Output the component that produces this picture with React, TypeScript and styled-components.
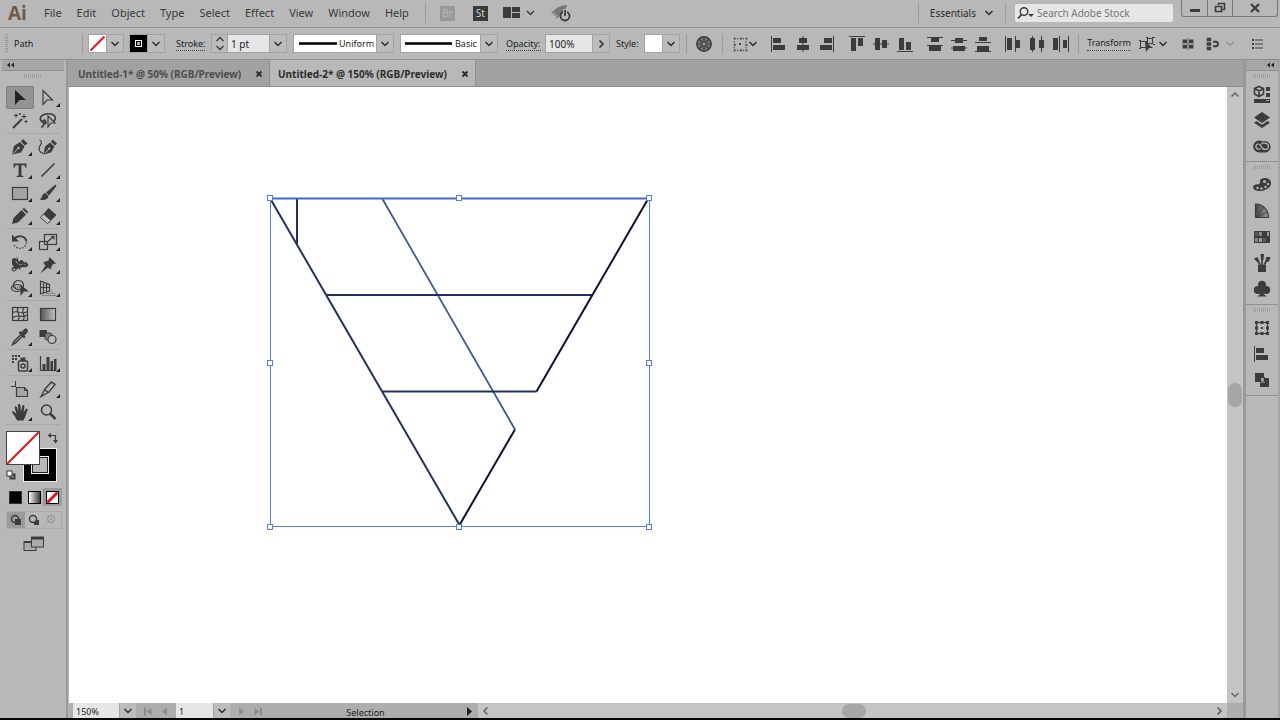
import React from "react";
import styled, { createGlobalStyle, css } from "styled-components";

const ink = "#3c3c3c";
const panel = "#b8b8b8";
const sans = `"Noto Sans", "Open Sans", sans-serif`;

const GlobalStyle = createGlobalStyle`
  *, *::before, *::after { box-sizing: border-box; }
  body { margin: 0; background: ${panel}; color: #2b2b2b; font-family: ${sans}; font-size: 11px; line-height: 16px; }
  button, input, select { font: inherit; color: inherit; margin: 0; padding: 0; border: 0; border-radius: 0; background: none; }
  button { display: inline-flex; align-items: center; justify-content: center; flex: none; }
  svg { display: block; flex: none; }
`;

/* ---------- shell ---------- */

const Shell = styled.div`
  display: flex;
  flex-direction: column;
  min-height: 100vh;
  border-bottom: 2px solid #050507;
`;

const MenuBar = styled.header`
  display: flex;
  align-items: center;
  height: 28px;
  padding: 0 2px 1px 8px;
  border-bottom: 1px solid #8f8f8f;
`;

const Logo = styled.span`
  width: 20px;
  margin-right: 16px;
  color: #6e5a4b;
  font: 700 19px/24px "Open Sans", sans-serif;
`;

const Menus = styled.nav`
  display: flex;
  gap: 15px;
`;

const MenuButton = styled.button`
  color: #383838;
`;

const Divider = styled.span<{ $left: number; $right: number }>`
  flex: none;
  width: 1px;
  height: 20px;
  margin: 0 ${(p) => p.$right}px 0 ${(p) => p.$left}px;
  background: #9c9c9c;
`;

const AppTile = styled.button<{ $dim?: boolean }>`
  width: 15px;
  height: 15px;
  margin-right: ${(p) => (p.$dim ? 18 : 15)}px;
  background: ${(p) => (p.$dim ? "#999" : "#3a3a3a")};
  color: ${(p) => (p.$dim ? "#b8b8b8" : "#d0d0d0")};
  font-size: 10px;
  line-height: 15px;
`;

const Spacer = styled.span`
  flex: 1;
`;

const Workspace = styled.button`
  gap: 8px;
  color: #2b2b2b;
  font-size: 10px;
`;

const SearchBox = styled.label`
  display: flex;
  align-items: center;
  width: 158px;
  height: 18px;
  padding-left: 2px;
  gap: 1px;
  background: #e6e6e6;
  border-radius: 2px;
  font-size: 10px;

  input { flex: 1; min-width: 0; outline: 0; }
  input::placeholder { color: #757575; opacity: 1; }
`;

const WindowButtons = styled.div`
  display: flex;
  align-self: flex-start;
  margin-left: 8px;
  height: 17px;
  border: 1px solid #777;
  border-top: 0;
  border-radius: 0 0 3px 3px;

  button { width: 25px; }
  button + button { border-left: 1px solid #777; }
  button:last-child { width: 45px; }
`;

/* ---------- control bar ---------- */

const ControlBar = styled.section`
  display: flex;
  align-items: center;
  height: 32px;
  padding: 0 12px 0 5px;
  border-bottom: 1px solid #8f8f8f;
  font-size: 9px;
  color: #1c1c1c;
`;

const SideGrip = styled.span`
  width: 3px;
  height: 20px;
  margin-right: 6px;
  background: repeating-linear-gradient(#989898 0 1px, transparent 1px 2px);
`;

const ObjectName = styled.span`
  width: 68px;
`;

const Group = styled.div<{ $width: number; $gap?: number }>`
  display: flex;
  flex: none;
  width: ${(p) => p.$width}px;
  height: 19px;
  margin-right: ${(p) => p.$gap ?? 6}px;
  border: 1px solid #a3a3a3;
  background: #fff;

  input, select { flex: 1; min-width: 0; outline: 0; appearance: none; }
  input { padding-left: 3px; background: #e6e6e6; font-size: 10px; }
`;

const Drop = styled.button`
  width: 17px;
  background: #bcbcbc;
  border-left: 1px solid #a3a3a3;
`;

const Stepper = styled.button`
  width: 16px;
  background: #bcbcbc;
  border-right: 1px solid #a3a3a3;
`;

const Swatch = styled.button`
  flex: 1;
`;

const Caption = styled.label<{ $width: number; $dotted?: boolean }>`
  flex: none;
  width: ${(p) => p.$width}px;
  line-height: 14px;
  white-space: nowrap;

  span { border-bottom: ${(p) => (p.$dotted ? "1px dotted #444" : "0")}; }
`;

const LinkButton = styled.button`
  width: 44px;
  height: 14px;
  margin-right: 6px;
  border-bottom: 1px dotted #444;
  white-space: nowrap;
`;

const IconButton = styled.button<{ $width?: number; $gap?: number }>`
  width: ${(p) => p.$width ?? 20}px;
  height: 20px;
  margin-right: ${(p) => p.$gap ?? 0}px;
`;

const AlignSet = styled.div<{ $gap: number }>`
  display: flex;
  gap: 4px;
  margin-right: ${(p) => p.$gap}px;
`;

/* ---------- body ---------- */

const Body = styled.div`
  display: flex;
  flex: 1;
`;

const Tools = styled.aside`
  flex: none;
  width: 68px;
  padding: 0 2px;
  border-right: 2px solid #999;
`;

const DockHead = styled.button<{ $end?: boolean }>`
  display: flex;
  width: 100%;
  height: 11px;
  padding: 0 4px;
  justify-content: ${(p) => (p.$end ? "flex-end" : "flex-start")};
  background: #a6a6a6;
  border-bottom: 1px solid #909090;
`;

const Grip = styled.div<{ $height: number }>`
  height: ${(p) => p.$height}px;
  padding: 3px 0;

  &::after {
    content: "";
    display: block;
    width: 18px;
    height: 4px;
    margin: 0 auto;
    background: repeating-linear-gradient(90deg, #a0a0a0 0 1px, transparent 1px 2px);
  }
`;

const ToolGroup = styled.div`
  display: grid;
  grid-template-columns: 28px 28px;
  grid-auto-rows: 23px;
  margin: 0 4px;
  padding: 1px 0;
  border-bottom: 1px solid #a8a8a8;
`;

const ToolButton = styled.button<{ $active?: boolean; $more?: boolean }>`
  position: relative;
  width: 28px;
  height: 23px;
  border-radius: 2px;
  ${(p) => p.$active && css`background: #939393; border: 1px solid #7d7d7d;`}
  ${(p) =>
    p.$more &&
    css`
      &::after {
        content: "";
        position: absolute;
        right: 2px;
        bottom: 2px;
        border-left: 4px solid transparent;
        border-bottom: 4px solid #222;
      }
    `}
`;

const Paints = styled.div`
  position: relative;
  height: 52px;
  margin: 6px 4px 5px;
`;

const PaintSlot = styled.button<{ $x: number; $y: number }>`
  position: absolute;
  left: ${(p) => p.$x}px;
  top: ${(p) => p.$y}px;
`;

const ModeRow = styled.div<{ $framed?: boolean }>`
  display: flex;
  width: 56px;
  height: 18px;
  margin: 0 4px 5px;
  ${(p) => p.$framed && css`border: 1px solid #aaa;`}
`;

const Mode = styled.button<{ $active?: boolean }>`
  flex: 1;
  background: ${(p) => (p.$active ? "#9b9b9b" : "transparent")};
`;

const ScreenMode = styled.button`
  width: 56px;
  margin: 2px 4px;
`;

const Document = styled.main`
  display: flex;
  flex: 1;
  flex-direction: column;
  min-width: 0;
`;

const TabStrip = styled.div`
  display: flex;
  height: 27px;
  background: #a2a2a2;
  border-bottom: 1px solid #8d8d8d;
`;

const Tab = styled.div<{ $active?: boolean }>`
  display: flex;
  align-items: center;
  justify-content: space-between;
  width: ${(p) => (p.$active ? 206 : 202)}px;
  padding: 2px 5px 0 ${(p) => (p.$active ? 8 : 10)}px;
  background: ${(p) => (p.$active ? panel : "transparent")};
  border-right: 1px solid #8f8f8f;
  color: ${(p) => (p.$active ? "#2c2c2c" : "#4d4d4d")};
  font-size: 10px;
  font-weight: 700;
  white-space: nowrap;
`;

const CloseTab = styled.button`
  width: 10px;
  height: 12px;
`;

const Stage = styled.div`
  display: flex;
  flex: 1;
`;

const Canvas = styled.div`
  position: relative;
  flex: 1;
  margin-left: 1px;
  background: #fff;
  overflow: hidden;
`;

const Artwork = styled.svg`
  position: absolute;
  left: 196px;
  top: 106px;
`;

const VScroll = styled.div`
  display: flex;
  flex-direction: column;
  align-items: center;
  width: 16px;
  padding: 3px 0;
  background: #c4c4c4;
`;

const Track = styled.div<{ $grow: number }>`
  flex: ${(p) => p.$grow};
`;

const Thumb = styled.div<{ $w: number; $h: number }>`
  width: ${(p) => p.$w}px;
  height: ${(p) => p.$h}px;
  border-radius: 8px;
  background: #a6a6a6;
`;

const StatusBar = styled.footer`
  display: flex;
  height: 15px;
  margin-left: 1px;
  background: #adadad;
  font-size: 9px;
  color: #1c1c1c;
`;

const StatusField = styled.div<{ $field: number; $left: number }>`
  display: flex;
  margin-left: ${(p) => p.$left}px;

  input { width: ${(p) => p.$field}px; padding: 3px 0 0 3px; background: #e6e6e6; outline: 0; }
`;

const StatusNav = styled.div`
  display: flex;
  padding: 0 3px;
`;

const NavButton = styled.button`
  width: 17px;
  padding-top: 2px;
`;

const StatusText = styled.span`
  width: 191px;
  padding-top: 2px;
  text-align: center;
`;

const HScroll = styled.div`
  display: flex;
  flex: 1;
  align-items: center;
  padding: 0 3px;
  background: #c4c4c4;
`;

const Corner = styled.span`
  width: 16px;
  background: #aeaeae;
`;

const Dock = styled.aside`
  flex: none;
  width: 37px;
  border-left: 3px solid #999;
  border-right: 2px solid #a4a4a4;
`;

const DockGroup = styled.div`
  padding-bottom: 2px;
  border-bottom: 1px solid #8f8f8f;
`;

const DockButton = styled.button`
  display: flex;
  width: 100%;
  height: 26px;
`;

/* ---------- icons ---------- */

const line = (w = 1.3, color = ink) => ({ fill: "none", stroke: color, strokeWidth: w });

const Chevron = ({ dir = "down", color = "#2d2d2d" }: { dir?: string; color?: string }) => {
  const d: Record<string, string> = {
    down: "M1.5 3 L5 6.5 L8.5 3",
    up: "M1.5 6.5 L5 3 L8.5 6.5",
    right: "M3.5 1.5 L7 5 L3.5 8.5",
    left: "M6.5 1.5 L3 5 L6.5 8.5",
  };
  return (
    <svg width="10" height="10" viewBox="0 0 10 10">
      <path d={d[dir]} {...line(1.5, color)} />
    </svg>
  );
};

const Collapse = () => (
  <svg width="8" height="6" viewBox="0 0 8 6">
    <path d="M4 0.5V5.5L1 3zM8 0.5V5.5L5 3z" fill="#222" />
  </svg>
);

const shapes: Record<string, React.ReactNode> = {
  selection: <path d="M5 2 L16 12 H9.5 L5 17z" fill="#222" />,
  direct: <path d="M5 2.5 L14.5 12 H9 L5 16.5z" {...line(1.2)} />,
  wand: (
    <>
      <path d="M3 17 L12 8" {...line(2)} />
      <path d="M14 3v5M11.5 5.5h5M6 2.5v4M4 4.5h4M16 9v3M14.5 10.5h3M10 2v2M9 3h2" {...line(1)} />
    </>
  ),
  lasso: (
    <>
      <path d="M8.500 11.500C5 12 1.500 10 2.500 6.500 4 3 11 1.500 15.500 4c3 2 2 5 0 6.500M8 11c-1.500-4 -4-1-2.500 1 2 2 3 0 2-2M5 13c1 2 0 3-2 3" {...line(1.600)} />
      <path d="M10 5 L17 12 H13 L10 16z" fill={panel} stroke={ink} strokeWidth="1.200" />
    </>
  ),
  pen: (
    <>
      <path d="M2 17.500 L4 9 10 5 14.500 9.500 11 15.500z" fill={ink} />
      <path d="M11 4.500 L13 2 17.500 6.500 15 8.500z" fill={ink} />
      <path d="M3 16.500 L8 11.500" {...line(1, panel)} />
      <circle cx="8.500" cy="11" r="1.200" fill={panel} />
    </>
  ),
  curvature: (
    <>
      <path d="M5.500 17.500 L7 9.500 12 5.500 16.500 9.500 13 15.500z M13 5 L14.500 2.500 19 6.500 17 8.500z" fill={ink} />
      <path d="M1.500 3c3 1 2 4 0 6.500 -1 3 0 6 4 7" {...line(1.200)} />
      <path d="M7 16 L11 12" {...line(1, panel)} />
      <circle cx="11.300" cy="11.500" r="1.100" fill={panel} />
    </>
  ),
  type: <path d="M3.5 3.5h13v4h-1.300l-.8-2.200h-3v10.200l2 .5v1H6.600v-1l2-.5V5.300h-3l-.8 2.200H3.500z" fill={ink} />,
  line: <path d="M3.5 16.5 L16.5 3.5" {...line(1.6)} />,
  rect: <rect x="2.5" y="4.500" width="15" height="12" fill="#a3a3a3" stroke={ink} strokeWidth="1.200" />,
  brush: (
    <>
      <path d="M17.500 1.500 L8 9.500 11 12.500 18.500 3z" fill={ink} />
      <path d="M7.500 10 L10.500 13c0 3-4 5-9 3.500 3-1 2-6 6-6.500z" fill={ink} />
    </>
  ),
  pencil: <path d="M2 18 L3.500 12 11.500 4 16 8.500 8 16.500z M12.500 3.200 L14 1.800 18.200 6 16.700 7.500z" fill={ink} />,
  eraser: (
    <>
      <path d="M10.500 2 L18.500 9 13 14.500 5.500 8z" fill={ink} />
      <path d="M5.500 8 L13 14.500 9.500 17.500 2.500 11.500z" fill="#c2c2c2" stroke={ink} strokeWidth="1" />
    </>
  ),
  rotate: (
    <>
      <path d="M4.500 6.500C8 2.500 15.500 4 16.500 9.500" {...line(1.900)} />
      <path d="M2 2.500v7h7z" fill={ink} />
      <path d="M16.500 10.500C16 17 7 19 3.500 12" {...line(1.300)} strokeDasharray="1.500 1.500" />
    </>
  ),
  scale: (
    <>
      <rect x="1.500" y="9.500" width="8" height="8" {...line(1.200)} />
      <rect x="6.500" y="2.500" width="12" height="10" {...line(1.200)} />
      <path d="M10 9.500 L15 5" {...line(1.200)} />
      <path d="M12.500 4h4v4z" fill={ink} />
    </>
  ),
  width: (
    <>
      <path d="M3 3c3 0 5 2 6 4 1-2 3-3 4-1 1 2 4 1 5 3 1 2-2 4-4 3 -2 0-3 1-5 1 -3 1-3 3-6 3 -2-1-2-4 1-4 -2-2-3-6-1-9z" fill={ink} />
      <path d="M5.500 6c2 1 2 4 5 4s3-2 5 0" {...line(1, panel)} />
      <path d="M7 2.500 L10 15M3 15 L17 7.500" {...line(1)} />
      <circle cx="4" cy="14.500" r="1.600" fill={panel} stroke={ink} />
    </>
  ),
  pin: <path d="M11.500 2 L18 8.500 14.500 9.500 12.500 14.500 10 12.500 2.500 18.500 7.500 10.500 5 7.500 10.500 5.500z" fill={ink} />,
  builder: (
    <>
      <ellipse cx="8.500" cy="7" rx="5" ry="4.500" {...line(1.200)} />
      <ellipse cx="7" cy="10" rx="5.500" ry="3.500" {...line(1.200)} />
      <path d="M3 9h10" {...line(1)} strokeDasharray="1 1" />
      <path d="M10.500 6.500 L19 13.500 H14 L10.500 18z" fill={ink} />
    </>
  ),
  perspective: (
    <>
      <path d="M2.500 2.500V16.500M2.500 3 L11.500 6.500V13L2.500 16M5.500 4v11M8.500 5v9M2.500 9.500h9" {...line(1.200)} />
      <path d="M4 17.500 H18 L12 11.500M8 15.500h8" {...line(0.800, "#777")} />
    </>
  ),
  mesh: (
    <>
      <rect x="2.500" y="3.500" width="15" height="13" {...line(1.200)} />
      <path d="M2.500 8.500c5-3 9 3 15-1M2.500 14c6-5 9 1 15-3M8 3.500c-3 5 4 7 0 13M14 3.500c-4 5 3 8-1 13" {...line(1.200)} />
    </>
  ),
  gradient: (
    <>
      <defs>
        <linearGradient id="toolGradient">
          <stop offset="0" stopColor="#555" />
          <stop offset="1" stopColor="#c4c4c4" />
        </linearGradient>
      </defs>
      <rect x="2.500" y="4.500" width="15" height="12" fill="url(#toolGradient)" stroke={ink} strokeWidth="1.200" />
    </>
  ),
  eyedropper: (
    <>
      <path d="M11 7.500 L4 14.500 2.500 17.500 5.500 16 12.500 9" {...line(1.500)} />
      <path d="M8.500 5.500 L10.500 4 11.500 5 14.500 2c2-1.500 4.500 1 3 3.300L14.500 8.500 15.500 9.500 14 11.500z" fill={ink} />
    </>
  ),
  blend: (
    <>
      <rect x="1.500" y="3" width="7.500" height="7" fill={ink} />
      <rect x="7" y="6" width="7" height="7" rx="2" fill="#808080" stroke={ink} />
      <circle cx="14" cy="12.500" r="4" fill="#bdbdbd" stroke={ink} strokeWidth="1.200" />
    </>
  ),
  spray: (
    <>
      <path d="M2 2h2v2H2zM5 2h2v2H5zM8 2h2v2H8zM2 5h2v2H2zM5 5h2v2H5zM2 8h2v2H2z" fill={ink} />
      <rect x="8.500" y="8" width="9" height="10" rx="1" {...line(1.500)} />
      <path d="M10.500 8V4.500h5V8z" fill={ink} />
      <circle cx="13" cy="13" r="2" {...line(1.400)} />
    </>
  ),
  graph: (
    <>
      <path d="M2.500 3V17.500H18.500" {...line(1.200)} />
      <path d="M4.500 11h3v6h-3zM8.500 4h3v13h-3zM12.500 8h2.500v9h-2.500zM16 6h2.500v11h-2.500z" fill={ink} />
    </>
  ),
  artboard: (
    <>
      <path d="M5.500 2v5M1 7.500h5" {...line(1.100)} />
      <path d="M6.500 8.500H14.500L17.500 11.500V17.500H6.500z" fill="#a5a5a5" stroke={ink} strokeWidth="1.200" />
      <path d="M14.500 8.500v3h3" {...line(1)} />
    </>
  ),
  slice: <path d="M3 17.5 L7 10 13.500 3 17 5.500 11 13z M6.500 10.500 L10.500 13.500" {...line(1.4)} />,
  hand: (
    <path
      d="M7 18.500 L5 14.500 2 10.500c0-1.500 1.500-1.500 2.500-.5L6.500 12 4.500 5.500c0-1.500 2-1.700 2.500-.2L8.300 9.500 8 3.300c0-1.700 2.300-1.700 2.400 0L11 9.500 12.300 4c.4-1.500 2.300-1.200 2.100.4L13.700 10.500 15.500 7.300c.8-1.200 2.600-.5 2 1L15.300 14.500 13.500 18.500z"
      fill={ink}
    />
  ),
  zoom: (
    <>
      <circle cx="8.500" cy="8" r="5" {...line(1.500)} />
      <path d="M12 11.500 L17.500 17" {...line(2.500)} />
    </>
  ),
  wheel: (
    <>
      <circle cx="10" cy="10" r="7.200" fill="#777" stroke={ink} strokeWidth="1.500" />
      <path d="M10 3v14M3 10h14M5 5 L15 15M15 5 L5 15" {...line(1.200)} />
      <circle cx="10" cy="10" r="2.200" fill="#999" stroke={ink} />
    </>
  ),
  grid: (
    <path
      d="M2 3h2v2H2zM6 3h1v2H6zM9 3h2v2H9zM12 3h1v2h-1zM15 3h2v2h-2zM2 7h1v2H2zM15 7h1v2h-1zM2 10h2v2H2zM8 9h2v2H8zM15 10h2v2h-2zM2 16h2v2H2zM6 16h1v2H6zM9 16h2v2H9zM12 16h1v2h-1zM15 16h2v2h-2zM2 13h1v2H2zM15 13h1v2h-1z"
      fill={ink}
    />
  ),
  alignL: <path d="M2 2h1v16H2zM4 4h8v5H4zM4 11h12v5H4z" fill={ink} />,
  alignC: <path d="M9.500 2h1v16h-1zM6 4h8v5H6zM4 11h12v5H4z" fill={ink} />,
  alignR: <path d="M16 2h1v16h-1zM7 4h8v5H7zM3 11h12v5H3z" fill={ink} />,
  alignT: <path d="M2 2h16v1H2zM4 4h5v13H4zM11 4h5v8h-5z" fill={ink} />,
  alignM: <path d="M2 9.500h16v1H2zM4 4h5v12H4zM11 6h5v8h-5z" fill={ink} />,
  alignB: <path d="M2 17h16v1H2zM4 4h5v12H4zM11 8h5v8h-5z" fill={ink} />,
  distT: <path d="M2 3h16v1H2zM6 4h8v4H6zM2 11h16v1H2zM4 12h12v5H4z" fill={ink} />,
  distM: <path d="M2 6h16v1H2zM6 4h8v5H6zM2 13.500h16v1H2zM4 12h12v5H4z" fill={ink} />,
  distB: <path d="M2 8h16v1H2zM6 3h8v4H6zM2 17h16v1H2zM4 12h12v5H4z" fill={ink} />,
  distL: <path d="M2 2h1v16H2zM4 4h5v12H4zM12 2h1v16h-1zM13 6h4v8h-4z" fill={ink} />,
  distC: <path d="M5 2h1v16H5zM3 4h5v12H3zM14 2h1v16h-1zM12 6h5v8h-5z" fill={ink} />,
  distR: <path d="M8 2h1v16H8zM2 4h5v12H2zM17 2h1v16h-1zM12 6h4v8h-4z" fill={ink} />,
  similar: (
    <>
      <rect x="3.500" y="7.500" width="6" height="6" {...line(1)} />
      <rect x="10.500" y="4.500" width="5" height="5" {...line(1)} />
      <path d="M2 6.500h2M2 14.500h2M9 3.500h2M15 3.500h3M16 10.500h2" {...line(1.200)} />
      <path d="M8 7.500 L16 14 H12 L9 18z" fill={ink} />
    </>
  ),
  isolate: (
    <path d="M4 5h5v4H4zM11 5h5v4h-5zM4 11h5v4H4zM11 11h5v4h-5zM9.700 3h.6v14h-.6zM3 9.700h14v.6H3z" fill={ink} />
  ),
  snap: (
    <>
      <path d="M3 3h5v4H3zM3 8h5v4H3zM3 13h5v4H3z" fill={ink} />
      <path d="M10 7.500h3a2.500 2.500 0 0 1 0 5h-3" {...line(2)} />
    </>
  ),
  list: <path d="M4 5h2v2H4zM4 9h2v2H4zM4 13h2v2H4zM7 5.500h8v1H7zM7 9.500h8v1H7zM7 13.500h8v1H7z" fill={ink} />,
  libraries: (
    <>
      <path d="M7 2.500 L11.500 4.500V10L7 12.500 2.500 10V4.500z M2.500 4.500 L7 7 11.500 4.500M7 7v5.500" {...line(1.600)} />
      <path d="M14 3h4v4h-4zM14 9h4v4h-4zM2 15h16v4H2z" fill={ink} />
      <path d="M14 16.500h3" {...line(1, "#aaa")} />
    </>
  ),
  layers: (
    <>
      <path d="M10 2 L18 7.500 10 13 2 7.500z" fill={ink} />
      <path d="M4.500 11 L10 14.800 15.500 11 18 12.700 10 18 2 12.700z" fill={ink} />
    </>
  ),
  cloud: (
    <>
      <path d="M7 16.500a6 6 0 1 1 3.500-11 5.800 5.800 0 1 1 3.500 11z" fill={ink} />
      <path d="M12.500 13.200C9.500 14.500 9.500 8 6.500 8a2.600 2.600 0 0 0 0 5.200h2M9 8.500c2-3 7.500-1.500 7.500 2 0 3-4 4-5.500 1.500" {...line(1.200, panel)} />
    </>
  ),
  palette: (
    <>
      <path d="M8 5.500c0-3 10-4 11 2 .5 6-7 9-13 8.500C0 15.500 0 10 3.500 9.500c3 0 5.500-.5 4.500-4z" fill={ink} />
      <g fill={panel}>
        <circle cx="5.500" cy="13" r="1.200" />
        <circle cx="9.500" cy="13.500" r="1.200" />
        <circle cx="13.500" cy="12" r="1.200" />
        <circle cx="16" cy="9" r="1.200" />
        <circle cx="12.500" cy="6.500" r="1.500" />
      </g>
    </>
  ),
  guide: (
    <>
      <defs>
        <linearGradient id="guideGradient">
          <stop offset="0" stopColor="#444" />
          <stop offset="1" stopColor="#999" />
        </linearGradient>
      </defs>
      <path d="M3.500 3C11 3 16.500 9 16.500 16.500H3.500z" fill="url(#guideGradient)" stroke={ink} strokeWidth="1.200" />
      <path d="M3.500 16.500 L12 6M3.500 16.500 L15.500 11" {...line(0.800)} />
    </>
  ),
  swatches: (
    <>
      <rect x="2" y="4" width="16" height="12" fill={ink} />
      <path d="M7 5h3v4H7zM3 11h3v4H3z" fill="#858585" />
      <path d="M15 5h2v4h-2zM7 11h3v4H7z" fill="#9a9a9a" />
      <path d="M3 5h3v4H3zM11 11h3v4h-3z" fill="#5c5c5c" />
    </>
  ),
  brushes: (
    <>
      <path d="M6 12h8v7H6z" fill={ink} />
      <path d="M8 12 L5 6M10 12V5M12 12 L15 7" {...line(1.700)} />
      <path d="M2 5.500 L5.500 4 7.500 8.500 4.500 8.500zM8.500 1h3.500L11.500 7H9zM14 4l4.500 0-1.500 4.500-3.500 .500z" fill={ink} />
    </>
  ),
  symbols: (
    <>
      <circle cx="10" cy="5.800" r="4" fill={ink} />
      <circle cx="5.800" cy="11" r="4" fill={ink} />
      <circle cx="14.200" cy="11" r="4" fill={ink} />
      <path d="M9 9h2c0 5 1 7 4 8.500H5c3-1.500 4-3.500 4-8.500z" fill={ink} />
    </>
  ),
  transform: (
    <>
      <rect x="4.500" y="4.500" width="11" height="11" {...line(1.200)} />
      <path d="M3 3h3v3H3zM8.500 3h3v3h-3zM14 3h3v3h-3zM3 8.500h3v3H3zM14 8.500h3v3h-3zM3 14h3v3H3zM8.500 14h3v3h-3zM14 14h3v3h-3z" fill={ink} />
      <path d="M9 9h2v2H9z" fill={ink} />
    </>
  ),
  pathfinder: (
    <>
      <path d="M3 3h9v4H8v5H3zM17 17H8v-4h5V8h4z" fill={ink} />
      <rect x="8.500" y="7.500" width="4" height="4.500" fill="#a0a0a0" stroke={ink} />
    </>
  ),
};

const Icon = ({ name, size = 20 }: { name: string; size?: number }) => (
  <svg width={size} height={size} viewBox="0 0 20 20" aria-hidden="true">
    {shapes[name]}
  </svg>
);

/* ---------- data ---------- */

const menus = ["File", "Edit", "Object", "Type", "Select", "Effect", "View", "Window", "Help"];

const toolGroups: [string, boolean][][] = [
  [["selection", false], ["direct", true], ["wand", false], ["lasso", false]],
  [["pen", true], ["curvature", false], ["type", true], ["line", true], ["rect", true], ["brush", true], ["pencil", true], ["eraser", true]],
  [["rotate", true], ["scale", true], ["width", true], ["pin", true], ["builder", true], ["perspective", true]],
  [["mesh", false], ["gradient", false], ["eyedropper", true], ["blend", false]],
  [["spray", true], ["graph", true]],
  [["artboard", false], ["slice", true], ["hand", true], ["zoom", false]],
];

const alignSets: [string[], number][] = [
  [["alignL", "alignC", "alignR"], 10],
  [["alignT", "alignM", "alignB"], 10],
  [["distT", "distM", "distB"], 10],
  [["distL", "distC", "distR"], 7],
];

const dockGroups = [
  ["libraries", "layers", "cloud"],
  ["palette", "guide", "swatches", "brushes", "symbols"],
  ["transform", "alignL", "pathfinder"],
];

const handles = [
  [270, 198], [459, 198], [649, 198],
  [270, 363], [649, 363],
  [270, 527], [459, 527], [649, 527],
];

/* ---------- sections ---------- */

const TopMenu = () => (
  <MenuBar>
    <Logo>Ai</Logo>
    <Menus>
      {menus.map((m) => (
        <MenuButton key={m}>{m}</MenuButton>
      ))}
    </Menus>
    <Divider $left={16} $right={14} />
    <AppTile $dim>Br</AppTile>
    <AppTile>St</AppTile>
    <IconButton $width={34} $gap={14} aria-label="Arrange documents">
      <svg width="34" height="14" viewBox="0 0 34 14">
        <path d="M0 1h8v11H0zM9 1h8v5H9zM9 7h8v5H9z" fill={ink} />
        <path d="M24 5 L27.500 8.500 31 5" {...line(1.500)} />
      </svg>
    </IconButton>
    <IconButton aria-label="GPU performance">
      <svg width="20" height="18" viewBox="0 0 20 18">
        <path d="M0 10C4 4 10 1 16 1 15 6 11 11 5 15L6 11 2 12 5 9z" fill="#777" />
        <circle cx="14" cy="12" r="4.500" {...line(1.800)} />
        <path d="M14 5v7" {...line(4, panel)} />
        <path d="M14 6v6" {...line(1.800)} />
      </svg>
    </IconButton>
    <Spacer />
    <Divider $left={14} $right={11} />
    <Workspace>
      Essentials
      <Chevron />
    </Workspace>
    <Divider $left={11} $right={9} />
    <SearchBox>
      <svg width="19" height="14" viewBox="0 0 19 14">
        <circle cx="7" cy="5.500" r="3.800" {...line(1.400)} />
        <path d="M4.500 8.500 L1 12.500" {...line(1.800)} />
        <path d="M11 8h6l-3 3z" fill={ink} />
      </svg>
      <input aria-label="Search Adobe Stock" placeholder="Search Adobe Stock" />
    </SearchBox>
    <WindowButtons>
      <button aria-label="Minimize">
        <svg width="12" height="12" viewBox="0 0 12 12"><path d="M1 7h10v3H1z" fill={ink} /></svg>
      </button>
      <button aria-label="Restore">
        <svg width="12" height="12" viewBox="0 0 12 12">
          <path d="M4.500 3V1.500h6v6H8.500M1.500 4.500h6v5h-6z" {...line(1.700)} />
        </svg>
      </button>
      <button aria-label="Close">
        <svg width="12" height="12" viewBox="0 0 12 12"><path d="M2 2 L10 10M10 2 L2 10" {...line(2.200)} /></svg>
      </button>
    </WindowButtons>
  </MenuBar>
);

const Controls = () => (
  <ControlBar>
    <SideGrip />
    <ObjectName>Path</ObjectName>
    <Divider $left={0} $right={5} />
    <Group $width={36} $gap={5}>
      <Swatch aria-label="Fill">
        <svg width="17" height="17" viewBox="0 0 17 17"><path d="M1.500 15.500 L15.500 1.500" {...line(2, "#e3141b")} /></svg>
      </Swatch>
      <Drop aria-label="Fill options"><Chevron /></Drop>
    </Group>
    <Group $width={36} $gap={11}>
      <Swatch aria-label="Stroke color">
        <svg width="17" height="17" viewBox="0 0 17 17">
          <rect x="0" y="0" width="17" height="17" fill="#000" />
          <rect x="5.500" y="5.500" width="6" height="6" {...line(1, "#fff")} />
          <rect x="7" y="7" width="3" height="3" fill="#aaa" />
        </svg>
      </Swatch>
      <Drop aria-label="Stroke options"><Chevron /></Drop>
    </Group>
    <Caption $width={35} $dotted htmlFor="weight"><span>Stroke:</span></Caption>
    <Group $width={76}>
      <Stepper aria-label="Step stroke weight">
        <svg width="10" height="15" viewBox="0 0 10 15"><path d="M1.500 5 L5 1.500 8.500 5M1.500 10 L5 13.500 8.500 10" {...line(1.400)} /></svg>
      </Stepper>
      <input id="weight" defaultValue="1 pt" />
      <Drop aria-label="Stroke weights"><Chevron /></Drop>
    </Group>
    <Group $width={101}>
      <svg width="45" height="17" viewBox="0 0 45 17"><path d="M5 8.500H43" {...line(2.400, "#000")} /></svg>
      <select aria-label="Variable width profile"><option>Uniform</option></select>
      <Drop aria-label="Profiles"><Chevron /></Drop>
    </Group>
    <Group $width={98} $gap={8}>
      <svg width="54" height="17" viewBox="0 0 54 17"><path d="M4 8.500H51" {...line(2.400, "#000")} /></svg>
      <select aria-label="Brush definition"><option>Basic</option></select>
      <Drop aria-label="Brushes"><Chevron /></Drop>
    </Group>
    <Caption $width={39} $dotted htmlFor="opacity"><span>Opacity:</span></Caption>
    <Group $width={65}>
      <input id="opacity" defaultValue="100%" />
      <Drop aria-label="Opacity slider"><Chevron dir="right" /></Drop>
    </Group>
    <Caption $width={28} htmlFor="style"><span>Style:</span></Caption>
    <Group $width={36}>
      <Swatch id="style" aria-label="Graphic style" />
      <Drop aria-label="Graphic styles"><Chevron /></Drop>
    </Group>
    <Divider $left={0} $right={7} />
    <IconButton aria-label="Recolor artwork"><Icon name="wheel" /></IconButton>
    <Divider $left={8} $right={10} />
    <IconButton $width={16} aria-label="Align to"><Icon name="grid" size={18} /></IconButton>
    <IconButton $width={8} $gap={12} aria-label="Align to options"><Chevron /></IconButton>
    {alignSets.map(([names, gap]) => (
      <AlignSet key={names[0]} $gap={gap}>
        {names.map((n) => (
          <IconButton key={n} aria-label={n}><Icon name={n} /></IconButton>
        ))}
      </AlignSet>
    ))}
    <Divider $left={0} $right={8} />
    <LinkButton>Transform</LinkButton>
    <IconButton aria-label="Select similar"><Icon name="similar" /></IconButton>
    <IconButton $width={12} $gap={9} aria-label="Similar options"><Chevron /></IconButton>
    <IconButton $gap={5} aria-label="Isolate"><Icon name="isolate" size={18} /></IconButton>
    <IconButton $gap={2} aria-label="Snap"><Icon name="snap" size={18} /></IconButton>
    <IconButton $width={10} aria-label="Snap options"><Chevron color="#8e8e8e" /></IconButton>
    <Spacer />
    <IconButton aria-label="Panel menu"><Icon name="list" /></IconButton>
  </ControlBar>
);

const Toolbox = () => (
  <Tools>
    <DockHead aria-label="Collapse tools"><Collapse /></DockHead>
    <Grip $height={14} />
    {toolGroups.map((group, i) => (
      <ToolGroup key={i}>
        {group.map(([name, more]) => (
          <ToolButton key={name} aria-label={name} $more={more} $active={name === "selection"}>
            <Icon name={name} />
          </ToolButton>
        ))}
      </ToolGroup>
    ))}
    <Paints>
      <PaintSlot $x={17} $y={17} aria-label="Stroke">
        <svg width="34" height="34" viewBox="0 0 34 34">
          <rect x="0.500" y="0.500" width="33" height="33" fill="#000" stroke="#eee" />
          <rect x="8.500" y="8.500" width="17" height="17" fill={panel} stroke="#eee" />
          <rect x="9.500" y="9.500" width="15" height="15" {...line(1, "#222")} />
        </svg>
      </PaintSlot>
      <PaintSlot $x={0} $y={0} aria-label="Fill">
        <svg width="34" height="34" viewBox="0 0 34 34">
          <rect x="0.500" y="0.500" width="33" height="33" fill="#fff" stroke="#444" />
          <path d="M1 33 L33 1" {...line(2, "#e3141b")} />
        </svg>
      </PaintSlot>
      <PaintSlot $x={41} $y={1} aria-label="Swap fill and stroke">
        <svg width="12" height="12" viewBox="0 0 12 12">
          <path d="M3 3.500H8.500V9" {...line(1.200)} />
          <path d="M0.500 3.500 L4 1V6zM8.500 11.500 L6 8H11z" fill={ink} />
        </svg>
      </PaintSlot>
      <PaintSlot $x={0} $y={39} aria-label="Default fill and stroke">
        <svg width="11" height="11" viewBox="0 0 11 11">
          <rect x="4.500" y="4.500" width="4" height="4" {...line(2)} />
          <rect x="1" y="1" width="5" height="5" fill="#fff" stroke={ink} />
        </svg>
      </PaintSlot>
    </Paints>
    <ModeRow>
      <Mode aria-label="Color">
        <svg width="13" height="13" viewBox="0 0 13 13"><rect x="0.500" y="0.500" width="12" height="12" fill="#000" stroke="#333" /></svg>
      </Mode>
      <Mode aria-label="Gradient">
        <svg width="13" height="13" viewBox="0 0 13 13">
          <defs>
            <linearGradient id="modeGradient"><stop offset="0" stopColor="#fff" /><stop offset="1" stopColor="#333" /></linearGradient>
          </defs>
          <rect x="0.500" y="0.500" width="12" height="12" fill="url(#modeGradient)" stroke="#000" />
        </svg>
      </Mode>
      <Mode $active aria-label="None">
        <svg width="13" height="13" viewBox="0 0 13 13">
          <rect x="0.500" y="0.500" width="12" height="12" fill="#fff" stroke="#000" />
          <path d="M1.500 11.500 L11.500 1.500" {...line(3, "#e3141b")} />
        </svg>
      </Mode>
    </ModeRow>
    <ModeRow $framed>
      {[ink, ink, "#9a9a9a"].map((c, i) => (
        <Mode key={i} $active={i === 0} aria-label={`Drawing mode ${i + 1}`}>
          <svg width="12" height="12" viewBox="0 0 12 12">
            {i === 1 && <path d="M6 6h5v5H6z" fill={c} />}
            <circle cx="5" cy="5" r="3.500" fill={i === 1 ? panel : "none"} stroke={c} strokeWidth="1.400" />
            {i === 0 && <path d="M5 5h6v6H5z" fill={c} />}
            {i === 2 && <circle cx="5" cy="5" r="1.200" fill={c} />}
          </svg>
        </Mode>
      ))}
    </ModeRow>
    <ScreenMode aria-label="Change screen mode">
      <svg width="22" height="16" viewBox="0 0 22 16">
        <rect x="1" y="5.500" width="12" height="9" fill="#aaa" stroke={ink} />
        <rect x="8.500" y="1" width="12" height="10" fill="#aaa" stroke={ink} />
        <path d="M1 5h7v2H1zM8 1h13v2.500H8z" fill={ink} />
      </svg>
    </ScreenMode>
  </Tools>
);

const DocTab = ({ title, active }: { title: string; active?: boolean }) => (
  <Tab role="tab" aria-selected={!!active} $active={active}>
    {title}
    <CloseTab aria-label={`Close ${title}`}>
      <svg width="8" height="8" viewBox="0 0 8 8"><path d="M1.500 1.500 L6.500 6.500M6.500 1.500 L1.500 6.500" {...line(1.800, "#2c2c2c")} /></svg>
    </CloseTab>
  </Tab>
);

const Drawing = () => (
  <Artwork width="390" height="340" viewBox="265 193 390 340">
    <g {...line(2, "#22315c")}>
      <path d="M270.500 199 L459.500 525" />
      <path d="M382.500 199 L515 429.500" stroke="#3a5290" strokeWidth="1.700" />
      <path d="M297 199V244M326.500 295H592M382 391.500H536.500" />
    </g>
    <path d="M648 199 L536.500 391.500M515 429.500 L459.500 525" {...line(2, "#0a1230")} />
    <rect x="270.500" y="198.500" width="379" height="328" {...line(1, "#5580e2")} />
    <path d="M270 198.500H649" {...line(2, "#4169cc")} />
    {handles.map(([x, y]) => (
      <rect key={`${x}-${y}`} x={x - 2.5} y={y - 2.5} width="5" height="5" fill="#fff" stroke="#5580e2" />
    ))}
  </Artwork>
);

const Nav = ({ label, d }: { label: string; d: string }) => (
  <NavButton aria-label={label}>
    <svg width="9" height="9" viewBox="0 0 9 9"><path d={d} fill="#8c8c8c" /></svg>
  </NavButton>
);

const Status = () => (
  <StatusBar>
    <StatusField $field={46} $left={4}>
      <input aria-label="Zoom level" defaultValue="150%" />
      <Drop aria-label="Zoom levels"><Chevron /></Drop>
    </StatusField>
    <StatusNav>
      <Nav label="First artboard" d="M1 0.500h2v8H1zM8.500 0.500v8L3.500 4.500z" />
      <Nav label="Previous artboard" d="M7 0.500v8L2 4.500z" />
    </StatusNav>
    <StatusField $field={37} $left={0}>
      <input aria-label="Artboard number" defaultValue="1" />
      <Drop aria-label="Artboards"><Chevron /></Drop>
    </StatusField>
    <StatusNav>
      <Nav label="Next artboard" d="M2 0.500v8L7 4.500z" />
      <Nav label="Last artboard" d="M6 0.500h2v8H6zM0.500 0.500v8L5.500 4.500z" />
    </StatusNav>
    <StatusText>Selection</StatusText>
    <NavButton aria-label="Status options">
      <svg width="9" height="9" viewBox="0 0 9 9"><path d="M2 0v9L7 4.500z" fill="#222" /></svg>
    </NavButton>
    <HScroll>
      <Chevron dir="left" color="#666" />
      <Track $grow={352} />
      <Thumb $w={24} $h={14} />
      <Track $grow={350} />
      <Chevron dir="right" color="#555" />
    </HScroll>
    <Corner />
  </StatusBar>
);

export default function App() {
  return (
    <Shell>
      <GlobalStyle />
      <TopMenu />
      <Controls />
      <Body>
        <Toolbox />
        <Document>
          <TabStrip role="tablist">
            <DocTab title="Untitled-1* @ 50% (RGB/Preview)" />
            <DocTab title="Untitled-2* @ 150% (RGB/Preview)" active />
          </TabStrip>
          <Stage>
            <Canvas>
              <Drawing />
            </Canvas>
            <VScroll>
              <Chevron dir="up" color="#666" />
              <Track $grow={285} />
              <Thumb $w={14} $h={24} />
              <Track $grow={285} />
              <Chevron color="#666" />
            </VScroll>
          </Stage>
          <Status />
        </Document>
        <Dock>
          <DockHead $end aria-label="Expand panels"><Collapse /></DockHead>
          {dockGroups.map((names) => (
            <DockGroup key={names[0]}>
              <Grip $height={10} />
              {names.map((n) => (
                <DockButton key={n} aria-label={n}><Icon name={n} /></DockButton>
              ))}
            </DockGroup>
          ))}
        </Dock>
      </Body>
    </Shell>
  );
}
